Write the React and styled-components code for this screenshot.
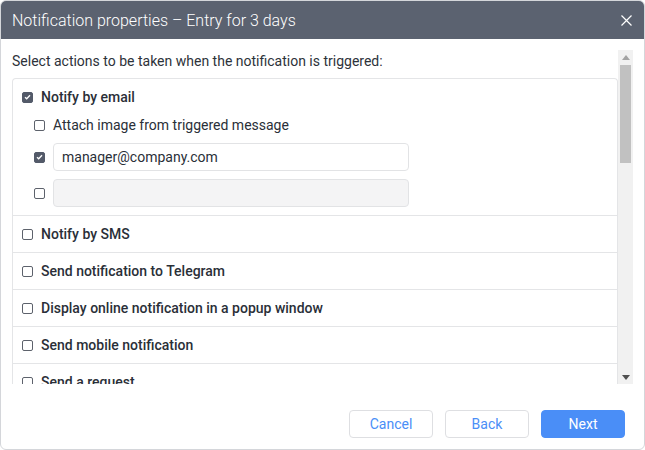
import React from 'react';
import styled, { createGlobalStyle } from 'styled-components';

const GlobalStyle = createGlobalStyle`
    html, body {
        margin: 0;
        padding: 0;
        background: #ffffff;
    }
    body {
        font-family: Roboto, "Liberation Sans", sans-serif;
    }
`

const Dialog = styled.div`
    display: flex;
    flex-direction: column;
    width: 645px;
    height: 450px;
    box-sizing: border-box;
    border: 1px solid #d4d6da;
    border-radius: 6px;
    overflow: hidden;
    background: #ffffff;
`

const Header = styled.div`
    display: flex;
    align-items: center;
    justify-content: space-between;
    height: 38px;
    flex: 0 0 38px;
    padding: 0 11px 0 11px;
    background-color: #5b6270;
    color: #ffffff;
`

const Title = styled.div`
    font-size: 16px;
    font-weight: 300;
`

const CloseButton = styled.div`
    display: flex;
    align-items: center;
    justify-content: center;
    width: 14px;
    height: 14px;
    cursor: pointer;
`

const Body = styled.div`
    display: flex;
    flex: 0 0 334px;
    padding: 11px 11px 0 11px;
    overflow: hidden;
`

const Content = styled.div`
    flex: 1;
    overflow: hidden;
    display: flex;
    flex-direction: column;
`

const Lead = styled.div`
    font-size: 14px;
    line-height: 20px;
    color: #2d323a;
    padding: 1px 0 7px 0;
    white-space: nowrap;
`

const List = styled.div`
    border: 1px solid #e4e5e7;
    border-bottom: none;
    border-radius: 4px 4px 0 0;
`

const Row = styled.div`
    display: flex;
    flex-direction: column;
    gap: 8px;
    padding: 8px 0 8px 9px;
    border-top: ${p => p.$first ? 'none' : '1px solid #e4e5e7'};
`

const Option = styled.label`
    display: flex;
    align-items: center;
    gap: 8px;
    height: 20px;
    font-size: 14px;
    font-weight: ${p => p.$bold ? 500 : 400};
    color: #2a2f38;
    white-space: nowrap;
`

const SubList = styled.div`
    display: flex;
    flex-direction: column;
    gap: 8px;
    padding-left: 12px;
`

const FieldRow = styled.div`
    display: flex;
    align-items: center;
    gap: 8px;
`

const Field = styled.div`
    box-sizing: border-box;
    width: 356px;
    height: 28px;
    padding: 0 8px;
    display: flex;
    align-items: center;
    border: 1px solid #e2e3e5;
    border-radius: 4px;
    background: ${p => p.$empty ? '#f4f4f5' : '#ffffff'};
    font-size: 14px;
    color: #2a2f38;
`

const Box = styled.span`
    box-sizing: border-box;
    display: flex;
    align-items: center;
    justify-content: center;
    width: 11px;
    height: 11px;
    flex: 0 0 11px;
    border-radius: 2px;
    border: 1px solid ${p => p.$checked ? '#535a69' : '#5d626c'};
    background: ${p => p.$checked ? '#535a69' : '#ffffff'};
`

const Scrollbar = styled.div`
    display: flex;
    flex-direction: column;
    width: 15px;
    flex: 0 0 15px;
    background: #f1f1f1;
`

const Arrow = styled.div`
    display: flex;
    align-items: center;
    justify-content: center;
    height: 14px;
    flex: 0 0 14px;
`

const Track = styled.div`
    flex: 1;
    display: flex;
    flex-direction: column;
    align-items: center;
`

const Thumb = styled.div`
    width: 11px;
    height: 98px;
    margin-top: 1px;
    background: #c1c1c1;
`

const Footer = styled.div`
    display: flex;
    justify-content: flex-end;
    gap: 12px;
    padding: 26px 19px 0 0;
`

const Button = styled.button`
    box-sizing: border-box;
    width: 84px;
    height: 28px;
    border-radius: 4px;
    font-family: Roboto, "Liberation Sans", sans-serif;
    font-size: 14px;
    cursor: pointer;
    border: 1px solid ${p => p.$primary ? '#4a8ef7' : '#dedfe2'};
    background: ${p => p.$primary ? '#4a8ef7' : '#ffffff'};
    color: ${p => p.$primary ? '#ffffff' : '#4a8ef7'};
`

const Check = ({ checked }) => (
    <Box $checked={checked}>
        {checked && (
            <svg width="7" height="6" viewBox="0 0 7 6">
                <path d="M1 3.2 L2.7 4.8 L6 1.2" fill="none" stroke="#ffffff" strokeWidth="1.3" />
            </svg>
        )}
    </Box>
)

const actions = [
    'Notify by SMS',
    'Send notification to Telegram',
    'Display online notification in a popup window',
    'Send mobile notification',
    'Send a request',
]

export default function App() {
    return (
        <>
            <GlobalStyle />
            <Dialog>
                <Header>
                    <Title>Notification properties – Entry for 3 days</Title>
                    <CloseButton>
                        <svg width="11" height="11" viewBox="0 0 11 11">
                            <path d="M0.5 0.5 L10.5 10.5 M10.5 0.5 L0.5 10.5" stroke="#ffffff" strokeWidth="1.2" />
                        </svg>
                    </CloseButton>
                </Header>
                <Body>
                    <Content>
                        <Lead>Select actions to be taken when the notification is triggered:</Lead>
                        <List>
                            <Row $first>
                                <Option $bold><Check checked />Notify by email</Option>
                                <SubList>
                                    <Option><Check />Attach image from triggered message</Option>
                                    <FieldRow>
                                        <Check checked />
                                        <Field>manager@company.com</Field>
                                    </FieldRow>
                                    <FieldRow>
                                        <Check />
                                        <Field $empty />
                                    </FieldRow>
                                </SubList>
                            </Row>
                            {actions.map(a => (
                                <Row key={a}>
                                    <Option $bold><Check />{a}</Option>
                                </Row>
                            ))}
                        </List>
                    </Content>
                    <Scrollbar>
                        <Arrow>
                            <svg width="8" height="5" viewBox="0 0 8 5"><path d="M0 5 L4 0 L8 5 Z" fill="#a3a3a3" /></svg>
                        </Arrow>
                        <Track><Thumb /></Track>
                        <Arrow>
                            <svg width="8" height="5" viewBox="0 0 8 5"><path d="M0 0 L8 0 L4 5 Z" fill="#505050" /></svg>
                        </Arrow>
                    </Scrollbar>
                </Body>
                <Footer>
                    <Button>Cancel</Button>
                    <Button>Back</Button>
                    <Button $primary>Next</Button>
                </Footer>
            </Dialog>
        </>
    );
}
